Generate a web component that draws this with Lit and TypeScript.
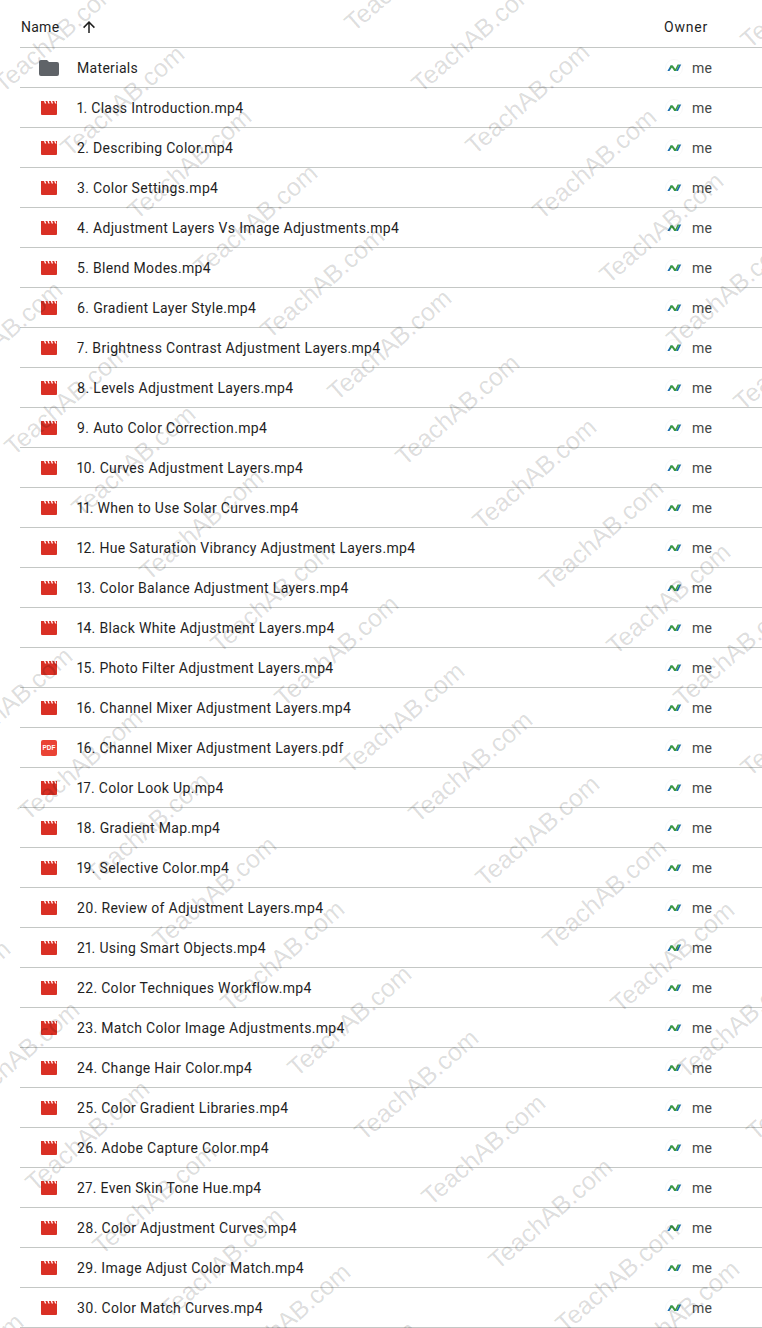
import { LitElement, html, css, svg } from "lit";
import { customElement } from "lit/decorators.js";

const files = [
  "1. Class Introduction.mp4", "2. Describing Color.mp4", "3. Color Settings.mp4",
  "4. Adjustment Layers Vs Image Adjustments.mp4", "5. Blend Modes.mp4", "6. Gradient Layer Style.mp4",
  "7. Brightness Contrast Adjustment Layers.mp4", "8. Levels Adjustment Layers.mp4", "9. Auto Color Correction.mp4",
  "10. Curves Adjustment Layers.mp4", "11. When to Use Solar Curves.mp4", "12. Hue Saturation Vibrancy Adjustment Layers.mp4",
  "13. Color Balance Adjustment Layers.mp4", "14. Black White Adjustment Layers.mp4", "15. Photo Filter Adjustment Layers.mp4",
  "16. Channel Mixer Adjustment Layers.mp4", "16. Channel Mixer Adjustment Layers.pdf", "17. Color Look Up.mp4",
  "18. Gradient Map.mp4", "19. Selective Color.mp4", "20. Review of Adjustment Layers.mp4", "21. Using Smart Objects.mp4",
  "22. Color Techniques Workflow.mp4", "23. Match Color Image Adjustments.mp4", "24. Change Hair Color.mp4",
  "25. Color Gradient Libraries.mp4", "26. Adobe Capture Color.mp4", "27. Even Skin Tone Hue.mp4",
  "28. Color Adjustment Curves.mp4", "29. Image Adjust Color Match.mp4", "30. Color Match Curves.mp4",
];

// Where the arm of each watermark's "T" begins.
const stamps: [number, number][] = [
  [738, 36],
  [342, 19], [409, 80], [463, 142], [530, 207], [597, 271], [664, 335], [731, 398],
  [-9, 80], [58, 144], [125, 207], [191, 263], [258, 326], [325, 388], [393, 453], [470, 517], [537, 578], [604, 642], [671, 694], [738, 764],
  [-64, 380], [2, 443], [69, 504], [137, 568], [208, 640], [272, 694], [338, 761], [406, 810], [473, 874], [540, 937], [608, 1000], [674, 1066], [744, 1128],
  [-54, 746], [16, 808], [83, 871], [150, 935], [218, 999], [285, 1064], [352, 1128], [419, 1193], [486, 1257], [553, 1320], [613, 1359],
  [-116, 1039], [-47, 1100], [23, 1179], [90, 1242], [157, 1306], [224, 1362], [290, 1420], [-103, 1412],
];

const folder = svg`<svg width="20" height="16" viewBox="0 0 20 16"><path fill="#5f6368" d="M2 0h6l2 2h8a2 2 0 0 1 2 2v10a2 2 0 0 1-2 2H2a2 2 0 0 1-2-2V2a2 2 0 0 1 2-2z"/></svg>`;
const video = svg`<svg width="16" height="14" viewBox="0 0 16 14"><path fill="#d93025" d="M0 0h16v13a1 1 0 0 1-1 1H1a1 1 0 0 1-1-1z"/><path fill="#fff" d="M3 0h1.4l.9 2.6H3.9zM6.4 0h1.4l.9 2.6H7.3zM9.8 0h1.4l.9 2.6h-1.4zM13.2 0h1.4l.9 2.6h-1.4z"/></svg>`;
const pdf = svg`<svg width="16" height="16" viewBox="0 0 16 16"><rect width="16" height="16" rx="2" fill="#ea4335"/><text x="8" y="10.4" text-anchor="middle" fill="#fff" font-family="Liberation Sans, sans-serif" font-weight="700" font-size="6.4">PDF</text></svg>`;
const owner = svg`<svg width="18" height="18" viewBox="0 0 18 18"><circle cx="9" cy="9" r="8.5" fill="#fff" stroke="#f3f3f3" stroke-width=".7"/><path fill="#1a6fb0" d="M2.4 12 5.6 6.4h2L5.2 11 4.4 12zM11 12l3.4-6.6h1.8L13 12z"/><path fill="#3d9a3f" d="M5.6 6.4h2.2l2.6 3.6 2.2-4.4h1.8L11 12H9.2L6.9 8.6 5.4 10.4 4.8 8z"/></svg>`;
const arrow = svg`<svg width="18" height="18" viewBox="0 0 24 24"><path fill="#1f1f1f" d="M13 20h-2V8l-5.5 5.5-1.42-1.42L12 4.16l7.92 7.92-1.42 1.42L13 8z"/></svg>`;

@customElement("app-root")
export class AppRoot extends LitElement {
  static styles = css`
    :host {
      display: block;
      position: relative;
      width: 762px;
      height: 1328px;
      overflow: hidden;
      background: #fff;
      font-family: Roboto, "Liberation Sans", sans-serif;
      font-size: 14px;
      color: #1f1f1f;
      font-variant-numeric: proportional-nums;
    }
    .list { margin-left: 20px; }
    .row {
      display: grid;
      grid-template-columns: 57px 1fr 98px;
      align-items: center;
      height: 39px;
      border-bottom: 1px solid #c4c7c5;
    }
    .head { height: 47px; grid-template-columns: 644px 1fr; }
    .name-head { display: flex; align-items: center; gap: 21px; padding-left: 1px; letter-spacing: 0.25px; position: relative; top: 3px; }
    .owner-head { letter-spacing: 0.8px; position: relative; top: 3px; }
    .icon { display: flex; justify-content: center; width: 16px; margin-left: 21px; }
    .name { white-space: nowrap; letter-spacing: 0.32px; }
    .owner { display: flex; align-items: center; gap: 9px; padding-left: 1px; color: #444746; letter-spacing: 0.25px; }
    svg { display: block; flex: none; }
    .wm {
      position: absolute;
      pointer-events: none;
      font-family: "Liberation Sans", sans-serif;
      font-size: 25px;
      line-height: 1;
      color: rgba(0, 0, 0, 0.14);
      white-space: nowrap;
      transform-origin: 0 0;
      transform: rotate(-41deg);
    }
  `;

  render() {
    return html`
      <div class="list">
        <div class="row head">
          <div class="name-head"><span>Name</span>${arrow}</div>
          <div class="owner-head">Owner</div>
        </div>
        ${this.row("Materials", folder)}
        ${files.map((f) => this.row(f, f.endsWith(".pdf") ? pdf : video))}
      </div>
      ${stamps.map(([x, y]) => html`<div class="wm" style="left:${x - 2}px;top:${y - 2}px">TeachAB.com</div>`)}
    `;
  }

  private row(name: string, icon: unknown) {
    return html`<div class="row">
      <div class="icon">${icon}</div>
      <div class="name">${name}</div>
      <div class="owner">${owner}<span>me</span></div>
    </div>`;
  }
}
